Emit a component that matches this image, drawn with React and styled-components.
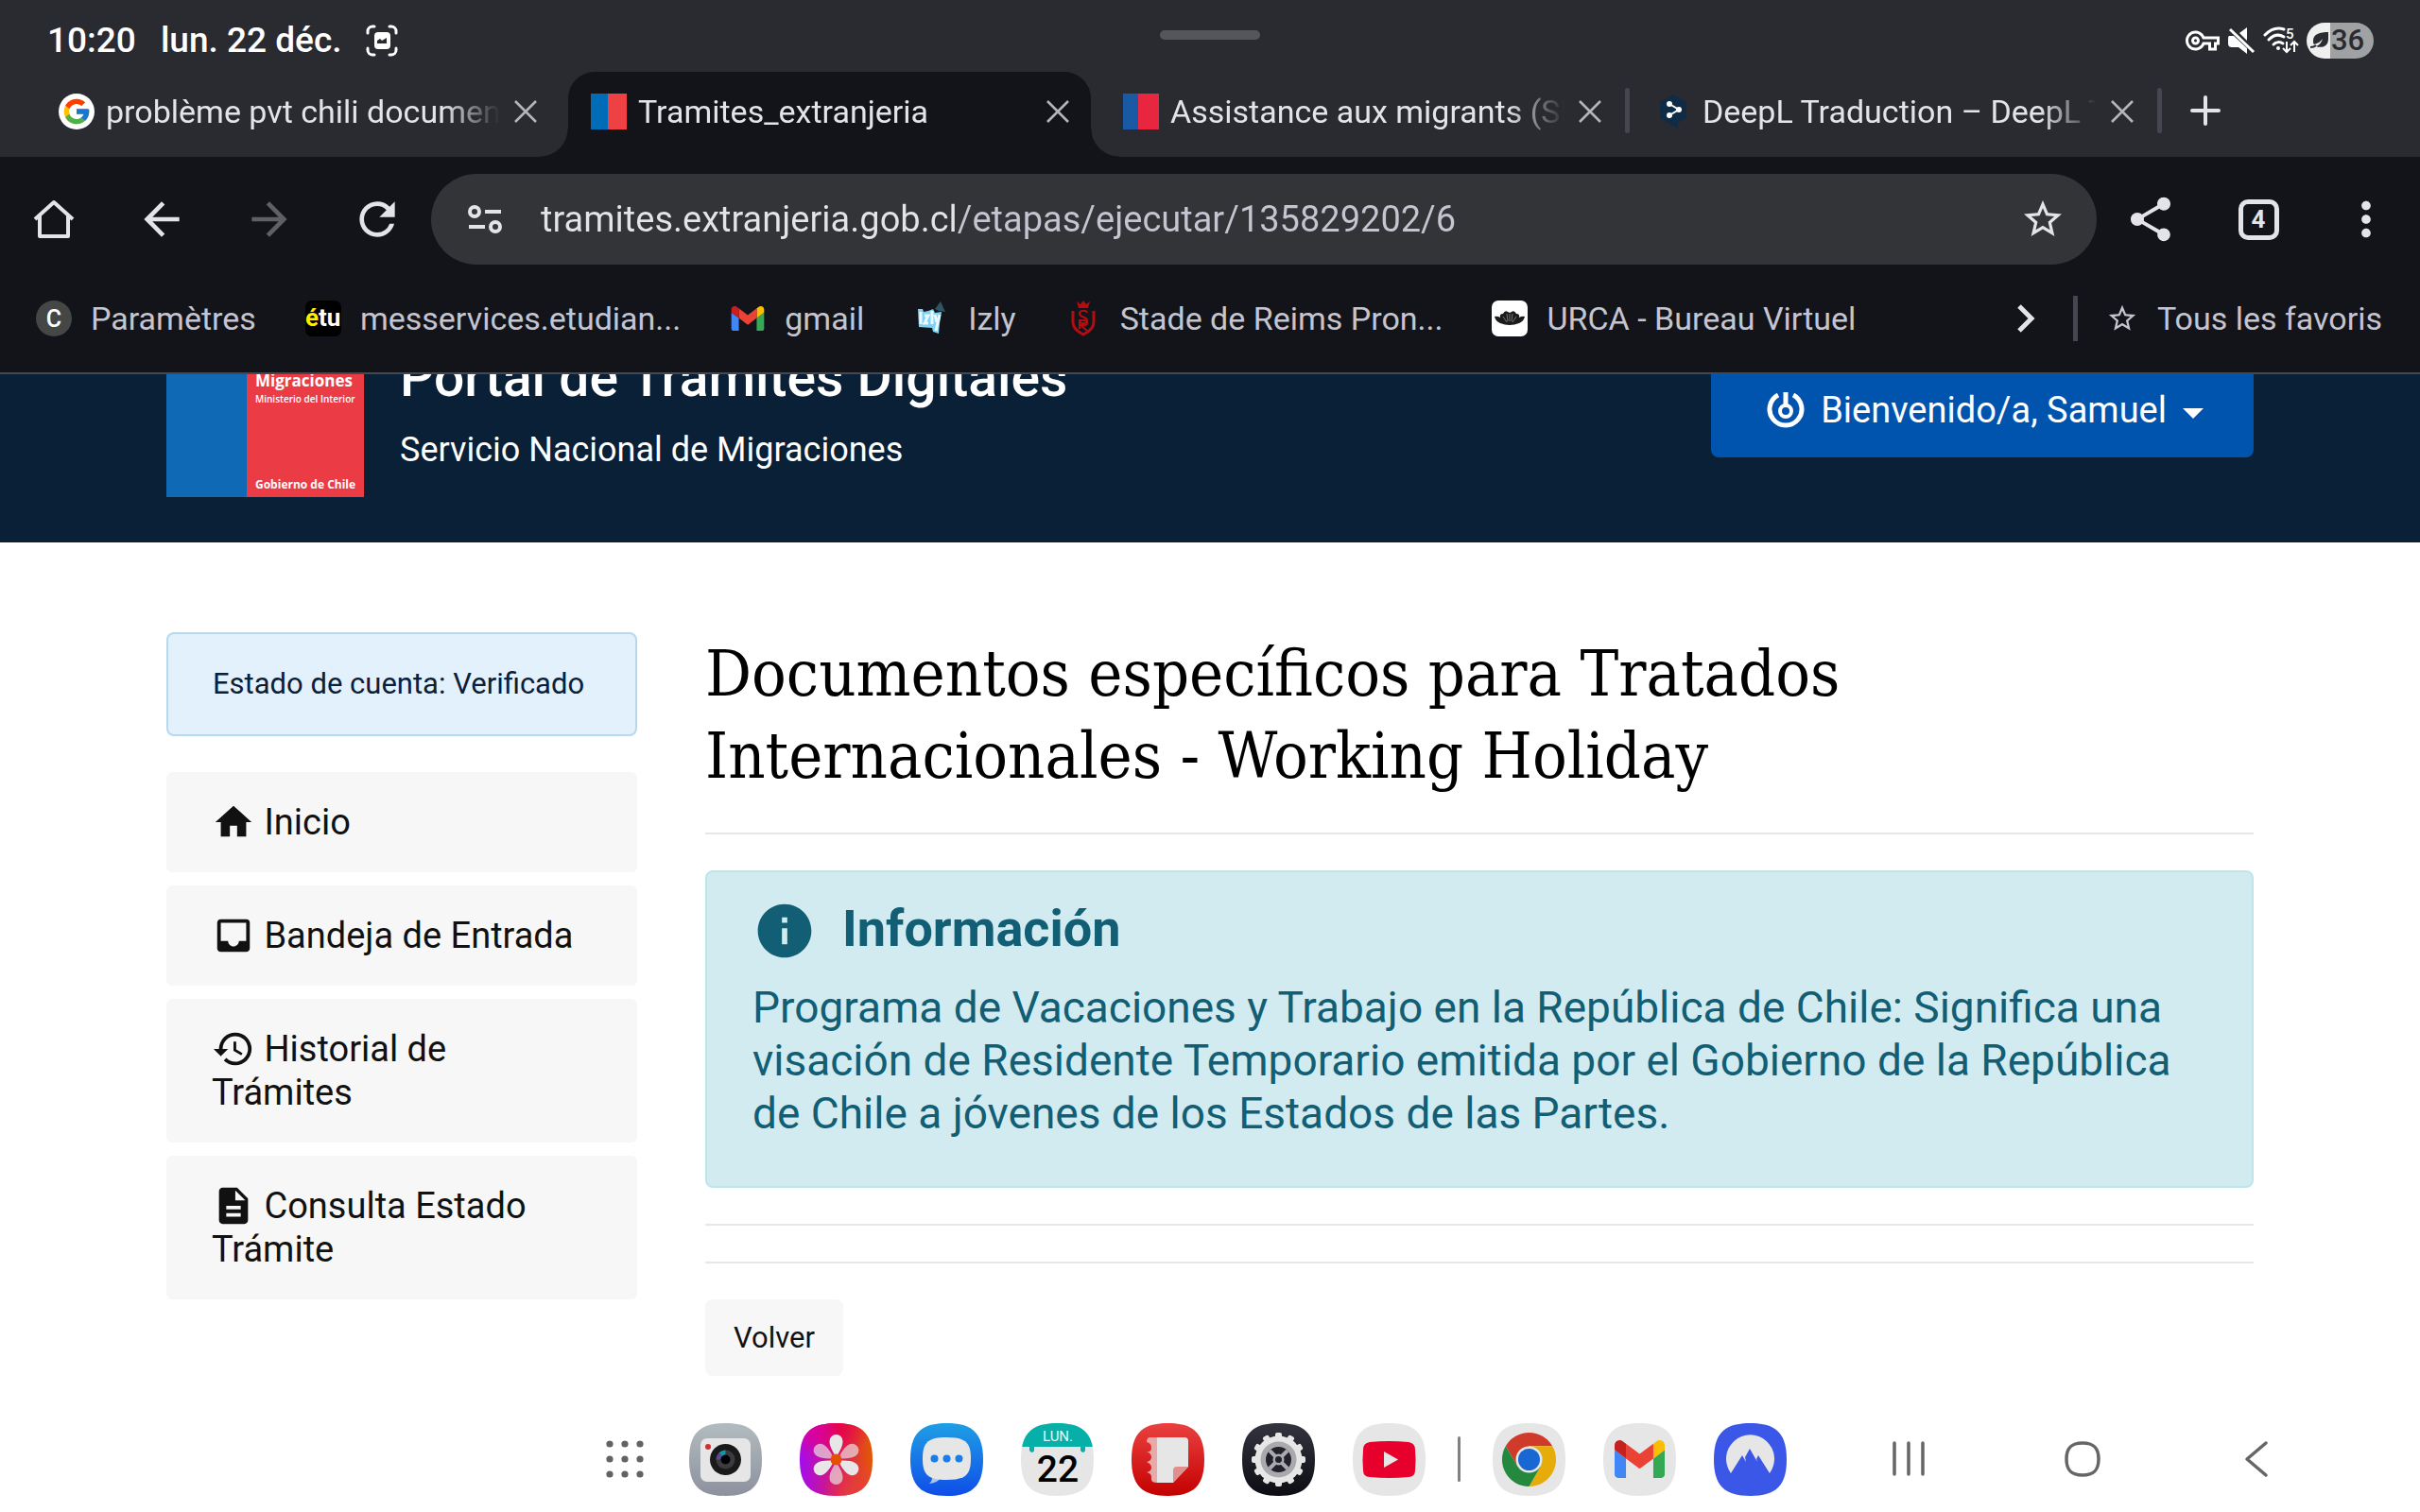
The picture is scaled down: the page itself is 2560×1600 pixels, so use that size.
import { useState } from "react";
import styled, { createGlobalStyle, css } from "styled-components";
import { FcGoogle } from "react-icons/fc";
import {
  MdArrowBack,
  MdArrowForward,
  MdDescription,
  MdHistory,
  MdHome,
  MdInbox,
  MdInfo,
  MdMoreVert,
  MdOutlineVpnKey,
  MdRefresh,
  MdShare,
  MdStarBorder,
} from "react-icons/md";

const ink = "#e3e3e8";
const squircle =
  "M38.5 0C66 0 77 11 77 38.5S66 77 38.5 77 0 66 0 38.5 11 0 38.5 0Z";

/* ---------- small drawings ---------- */

const CloseIcon = () => (
  <svg width="26" height="26" viewBox="0 0 26 26" aria-hidden="true">
    <path d="M2 2 24 24M24 2 2 24" stroke="#b4b5ba" strokeWidth="2.6" />
  </svg>
);

const PlusIcon = () => (
  <svg width="34" height="34" viewBox="0 0 34 34" aria-hidden="true">
    <path
      d="M17 3v28M3 17h28"
      stroke={ink}
      strokeWidth="4"
      strokeLinecap="round"
    />
  </svg>
);

const CaptureIcon = () => (
  <svg width="34" height="34" viewBox="0 0 34 34" aria-hidden="true">
    <path
      d="M2 9V7a5 5 0 0 1 5-5h2M25 2h2a5 5 0 0 1 5 5v2M32 25v2a5 5 0 0 1-5 5h-2M9 32H7a5 5 0 0 1-5-5v-2"
      fill="none"
      stroke="#fff"
      strokeWidth="3"
      strokeLinecap="round"
    />
    <rect x="9" y="8" width="17" height="18" rx="4" fill="#fff" />
    <path d="M12 20v-3l3-2 2 2 5-3v6Z" fill="#2a2b30" />
  </svg>
);

const MutedIcon = () => (
  <svg width="30" height="30" viewBox="0 0 30 30" aria-hidden="true">
    <path d="M13 7 21 1v14Z" fill="#fff" />
    <path d="M2 10h5l14 13v6l-9-7H5q-4 0-4-4v-5q0-3 1-3Z" fill="#fff" />
    <path d="M3 3 28 27" stroke="#fff" strokeWidth="3" />
  </svg>
);

const WifiIcon = () => (
  <svg width="38" height="30" viewBox="0 0 38 30" aria-hidden="true">
    <g fill="none" stroke="#fff" strokeWidth="3" strokeLinecap="round">
      <path d="M2 9C9 2 16 1 22 3" />
      <path d="M6 14c5-5 11-6 16-3" />
      <path d="M11 19c3-3 7-3 10-1" />
    </g>
    <circle cx="16" cy="23" r="2" fill="#fff" />
    <text
      x="24"
      y="13"
      fontSize="15"
      fontWeight="500"
      fontFamily="Roboto, sans-serif"
      fill="#fff"
    >
      5
    </text>
    <path
      d="M25 16v10M21 23l4 4 4-4M33 27V17M29 20l4-4 4 4"
      fill="none"
      stroke="#fff"
      strokeWidth="2"
    />
  </svg>
);

const LeafIcon = () => (
  <svg width="20" height="20" viewBox="0 0 20 20" aria-hidden="true">
    <path
      d="M19 1C10 1 3 3 3 10c0 2 0 3 1 4 4-1 7-3 9-6-1 4-4 7-7 8 5 2 13 1 13-8Z"
      fill="#2a2b30"
    />
    <path d="M0 17q4 0 6-2" stroke="#2a2b30" strokeWidth="2" fill="none" />
  </svg>
);

const HomeOutline = () => (
  <svg width="44" height="44" viewBox="0 0 44 44" aria-hidden="true">
    <path
      d="M2 22 22 4l20 18M7 18v22h30V18"
      fill="none"
      stroke={ink}
      strokeWidth="4"
      strokeLinejoin="round"
    />
  </svg>
);

const TuneIcon = () => (
  <svg width="38" height="32" viewBox="0 0 38 32" aria-hidden="true">
    <g fill="none" stroke={ink} strokeWidth="4">
      <circle cx="8" cy="8" r="5" />
      <circle cx="30" cy="24" r="5" />
      <path d="M19 8h17M2 24h17" />
    </g>
  </svg>
);

const ChevronIcon = () => (
  <svg width="40" height="32" viewBox="0 0 40 32" aria-hidden="true">
    <path d="m13 3 13 13-13 13" fill="none" stroke={ink} strokeWidth="5" />
  </svg>
);

const FlagIcon = ({ split, blue, red }) => (
  <svg width="38" height="38" viewBox="0 0 38 38" aria-hidden="true">
    <rect width="38" height="38" fill={red} />
    <rect width={split} height="38" fill={blue} />
  </svg>
);

const DeepLIcon = () => (
  <svg width="38" height="38" viewBox="0 0 38 38" aria-hidden="true">
    <path d="m19 1 14 8v17l-9 5v6l-7-4L5 26V9Z" fill="#0f2b46" />
    <path d="m15 11 10 6-10 6" fill="none" stroke="#fff" strokeWidth="2" />
    <circle cx="15" cy="11" r="3" fill="#fff" />
    <circle cx="25" cy="17" r="3" fill="#fff" />
    <circle cx="15" cy="23" r="3" fill="#fff" />
  </svg>
);

const GmailMark = (props) => (
  <svg viewBox="52 42 88 66" aria-hidden="true" {...props}>
    <path fill="#4285f4" d="M58 108h14V74L52 59v43c0 3.32 2.69 6 6 6" />
    <path fill="#34a853" d="M120 108h14c3.32 0 6-2.69 6-6V59l-20 15" />
    <path fill="#fbbc04" d="M120 48v26l20-15v-8c0-7.42-8.47-11.65-14.4-7.2" />
    <path fill="#ea4335" d="M72 74V48l24 18 24-18v26L96 92" />
    <path
      fill="#c5221f"
      d="M52 51v8l20 15V48l-5.6-4.2c-5.94-4.45-14.4-.22-14.4 7.2"
    />
  </svg>
);

const IzlyIcon = () => (
  <svg width="38" height="38" viewBox="0 0 38 38" aria-hidden="true">
    <path d="m23 9 6-8 5 11-7-1Z" fill="#2f5565" />
    <path
      d="M5 9h5l1 3 5-1 5-2 2 4 7-1-2 12-1 11-6-2-1-4-14-1Z"
      fill="#7ed3f2"
    />
    <path
      d="M8 12v13M12 16h4l-4 8h4M20 11v14M23 15l2 8M28 15l-4 17"
      stroke="#e9f9ff"
      strokeWidth="3"
      fill="none"
    />
  </svg>
);

const ReimsIcon = () => (
  <svg width="38" height="38" viewBox="0 0 38 38" aria-hidden="true">
    <path d="m12 1 4 3 3-4 3 4 4-3-2 7H14Z" fill="#b30d10" />
    <g fill="none" stroke="#b30d10" strokeWidth="2">
      <path d="M8 11v12c0 6 5 10 11 13 6-3 11-7 11-13V11" strokeWidth="3" />
      <path d="M23 13c-1-3-8-3-8 1s8 3 8 7-7 4-8 1" />
      <path d="M15 30v-9h5c4 0 4 5 0 5h-4l7 6" />
    </g>
  </svg>
);

const UrcaIcon = () => (
  <svg width="38" height="38" viewBox="0 0 38 38" aria-hidden="true">
    <rect width="38" height="38" rx="7" fill="#fff" />
    <path
      d="M3 17q3-1 6 1-1-4 3-4 2-4 5-2l2 1 2-1q3-2 5 2 4 0 3 4 3-2 6-1-1 5-6 7-10 4-20 0-5-2-6-7Z"
      fill="#1b1b1b"
    />
    <path d="m12 17 4 6M16 14l1 8M19 14v8M22 14l-1 8M26 17l-4 6" stroke="#777" />
  </svg>
);

const PowerIcon = () => (
  <svg width="40" height="40" viewBox="0 0 40 40" aria-hidden="true">
    <g fill="none" stroke="#fff">
      <path d="M12 4a17 17 0 1 0 16 0" strokeWidth="5" />
      <circle cx="20" cy="21" r="6" strokeWidth="4" />
      <path d="M20 1v14" strokeWidth="5" />
    </g>
  </svg>
);

/* ---------- dock icons ---------- */

const CameraApp = () => (
  <svg width="77" height="77" viewBox="0 0 77 77" aria-hidden="true">
    <linearGradient id="cam" x2="0" y2="1">
      <stop stopColor="#b2bcbf" />
      <stop offset="1" stopColor="#8d919e" />
    </linearGradient>
    <path d={squircle} fill="url(#cam)" />
    <rect x="12" y="16" width="53" height="46" rx="7" fill="#e6e6e6" />
    <circle cx="20" cy="25" r="3" fill="#d32f2f" />
    <circle cx="38.5" cy="38.5" r="16.5" fill="#1a1a1b" />
    <circle cx="38.5" cy="38.5" r="10" fill="#3d3b40" />
    <path d="M38.5 38.5v-10a10 10 0 0 0-7 3Z" fill="#1795a5" />
    <path d="m38.5 38.5-7-7a10 10 0 0 0-3 7Z" fill="#5b4a8f" />
    <circle cx="38.5" cy="38.5" r="5" fill="#000" />
  </svg>
);

const GalleryApp = () => (
  <svg width="77" height="77" viewBox="0 0 77 77" aria-hidden="true">
    <linearGradient id="gal" x2="1" y2="0">
      <stop stopColor="#a30cf0" />
      <stop offset="0.55" stopColor="#dd1a66" />
      <stop offset="1" stopColor="#e35a00" />
    </linearGradient>
    <radialGradient id="galTop" cx="0.5" cy="0" r="0.5">
      <stop stopColor="#e8003c" />
      <stop offset="1" stopColor="#e8003c" stopOpacity="0" />
    </radialGradient>
    <radialGradient id="galLeft" cx="0.2" cy="0.1" r="0.4">
      <stop stopColor="#dc00a0" />
      <stop offset="1" stopColor="#dc00a0" stopOpacity="0" />
    </radialGradient>
    <radialGradient id="galLow" cx="0.8" cy="1" r="0.5">
      <stop stopColor="#e5403a" />
      <stop offset="1" stopColor="#e5403a" stopOpacity="0" />
    </radialGradient>
    {["gal", "galTop", "galLeft", "galLow"].map((id) => (
      <path key={id} d={squircle} fill={`url(#${id})`} />
    ))}
    {[0, 60, 120, 180, 240, 300].map((deg) => (
      <path
        key={deg}
        d="M38.5 36C34 29 31.500 24 31.500 19a7 7 0 0 1 14 0C45.500 24 43 29 38.500 36Z"
        fill="#e8e6e6"
        fillOpacity={deg % 120 ? 0.68 : 1}
        transform={`rotate(${deg} 38.5 38.5)`}
      />
    ))}
    <circle cx="38.5" cy="38.5" r="6" fill="#e65000" />
  </svg>
);

const MessagesApp = () => (
  <svg width="77" height="77" viewBox="0 0 77 77" aria-hidden="true">
    <linearGradient id="msg" x2="0" y2="1">
      <stop stopColor="#1f9fe5" />
      <stop offset="1" stopColor="#0f4de8" />
    </linearGradient>
    <path d={squircle} fill="url(#msg)" />
    <path d="M23 54q1 7-3 10 9-1 12-6Z" fill="#a9c6f2" />
    <path
      d="M38.500 15C58 15 64 20 64 37.500S58 60 38.500 60 13 55 13 37.500 19 15 38.500 15Z"
      fill="#e6e6e6"
    />
    <circle cx="25.5" cy="37.5" r="4" fill="#1b7de6" />
    <circle cx="38.5" cy="37.5" r="4" fill="#1b7de6" />
    <circle cx="51.5" cy="37.5" r="4" fill="#1b7de6" />
  </svg>
);

const CalendarApp = () => (
  <svg width="77" height="77" viewBox="0 0 77 77" aria-hidden="true">
    <clipPath id="cal">
      <path d={squircle} />
    </clipPath>
    <g clipPath="url(#cal)">
      <rect width="77" height="77" fill="#e6e6e6" />
      <rect width="77" height="25" fill="#06b0a8" />
      <path d="M9 24h5v5q-2 4-5 0ZM63 24h5v5q-2 4-5 0Z" fill="#06b0a8" />
    </g>
    <g fontFamily="Roboto, sans-serif" textAnchor="middle">
      <text x="39" y="19" fontSize="15" fill="#e6f6f5">
        LUN.
      </text>
      <text x="39" y="62" fontSize="39" fontWeight="500" fill="#000">
        22
      </text>
    </g>
  </svg>
);

const NotesApp = () => (
  <svg width="77" height="77" viewBox="0 0 77 77" aria-hidden="true">
    <linearGradient id="notes" x2="0" y2="1">
      <stop stopColor="#ea4140" />
      <stop offset="1" stopColor="#c40000" />
    </linearGradient>
    <path d={squircle} fill="url(#notes)" />
    <path
      d="M27 15h-7q-4 0-4 5 5 1 5 6t-5 4q5 2 5 6t-5 5q5 2 5 6t-5 5q5 1 5 5-1 6 6 6Z"
      fill="#e8a9a8"
    />
    <path d="M27 15h29q4 0 4 4v27L44 63H27Z" fill="#e6e6e6" />
    <path d="M44 63V50q0-4 4-4h12Z" fill="#e08f8e" />
  </svg>
);

const SettingsApp = () => (
  <svg width="77" height="77" viewBox="0 0 77 77" aria-hidden="true">
    <linearGradient id="set" x2="0" y2="1">
      <stop stopColor="#34343f" />
      <stop offset="1" stopColor="#0c0c12" />
    </linearGradient>
    <path d={squircle} fill="url(#set)" />
    {[0, 30, 60, 90, 120, 150].map((deg) => (
      <rect
        key={deg}
        x="35"
        y="10"
        width="7"
        height="57"
        rx="2"
        fill="#e6e6e6"
        transform={`rotate(${deg} 38.5 38.5)`}
      />
    ))}
    <circle cx="38.5" cy="38.5" r="25" fill="#e6e6e6" />
    <circle cx="38.5" cy="38.5" r="19" fill="#aaaaae" />
    <circle cx="38.5" cy="38.5" r="13.5" fill="#22222c" />
    <path d="m29 29 19 19M48 29 29 48" stroke="#aaaaae" strokeWidth="4" />
    <circle cx="38.5" cy="38.5" r="6" fill="#aaaaae" />
    <circle cx="38.5" cy="38.5" r="3.500" fill="#22222c" />
  </svg>
);

const YoutubeApp = () => (
  <svg width="77" height="77" viewBox="0 0 77 77" aria-hidden="true">
    <path d={squircle} fill="#e6e6e6" />
    <path
      d="M18 20q20-2 41 0 7 1 7 8 1 10 0 22 0 7-7 7-20 2-41 0-7 0-7-7-1-12 0-22 0-7 7-8Z"
      fill="#e8002d"
    />
    <path d="m33 30 15 8.500L33 47Z" fill="#e6e6e6" />
  </svg>
);

const ChromeApp = () => (
  <svg width="77" height="77" viewBox="-38.5 -38.5 77 77" aria-hidden="true">
    <path d={squircle} transform="translate(-38.5 -38.5)" fill="#e6e6e6" />
    <path
      d="M-24.700-14.250A28.500 28.500 0 0 1 24.700-14.250H0L-12.340 7.120Z"
      fill="#d03a2b"
    />
    <path
      d="M24.700-14.250A28.500 28.500 0 0 1 0 28.500L12.340 7.120 0-14.250Z"
      fill="#e6ad0a"
    />
    <path
      d="M0 28.500A28.500 28.500 0 0 1-24.700-14.250L-12.340 7.120h24.680Z"
      fill="#24883f"
    />
    <circle r="14" fill="#e6e6e6" />
    <circle r="11.5" fill="#1967d2" />
  </svg>
);

const GmailApp = () => (
  <svg width="77" height="77" viewBox="0 0 77 77" aria-hidden="true">
    <path d={squircle} fill="#e6e6e6" />
    <GmailMark x="12" y="18" width="53" height="40" />
  </svg>
);

const NordApp = () => (
  <svg width="77" height="77" viewBox="0 0 77 77" aria-hidden="true">
    <path d={squircle} fill="#3a57e8" />
    <path
      d="M18 53A25.500 25.500 0 1 1 59 53L47 34l-2 4 1 3-8-14-5 9 1 5-4-7Z"
      fill="#e6e6e6"
    />
  </svg>
);

const DotsIcon = () => (
  <svg width="40" height="40" viewBox="0 0 40 40" aria-hidden="true">
    {[4, 20, 36].map((y) =>
      [4, 20, 36].map((x) => (
        <circle key={`${x}-${y}`} cx={x} cy={y} r="3.6" fill="#636363" />
      ))
    )}
  </svg>
);

const NavIcon = ({ d }) => (
  <svg width="44" height="44" viewBox="0 0 44 44" aria-hidden="true">
    <path
      d={d}
      fill="none"
      stroke="#666"
      strokeWidth="3.5"
      strokeLinecap="round"
      strokeLinejoin="round"
    />
  </svg>
);

/* ---------- data ---------- */

const tabs = [
  { title: "problème pvt chili documents", icon: <GoogleTabIcon /> },
  {
    title: "Tramites_extranjeria",
    icon: <FlagIcon split={18} blue="#006cb7" red="#ef4144" />,
  },
  {
    title: "Assistance aux migrants (SERMIG)",
    icon: <FlagIcon split={16} blue="#1a5aa5" red="#e8263f" />,
    divided: true,
  },
  { title: "DeepL Traduction – DeepL Translate", icon: <DeepLIcon />, divided: true },
];

const menu = [
  { label: "Inicio", Icon: MdHome },
  { label: "Bandeja de Entrada", Icon: MdInbox },
  { label: "Historial de Trámites", Icon: MdHistory },
  { label: "Consulta Estado Trámite", Icon: MdDescription },
];

const apps = [
  ["Appareil photo", CameraApp],
  ["Galerie", GalleryApp],
  ["Messages", MessagesApp],
  ["Calendrier", CalendarApp],
  ["Notes", NotesApp],
  ["Paramètres", SettingsApp],
  ["YouTube", YoutubeApp],
];

const recentApps = [
  ["Chrome", ChromeApp],
  ["Gmail", GmailApp],
  ["NordVPN", NordApp],
];

function GoogleTabIcon() {
  return (
    <RoundIcon>
      <FcGoogle size={32} />
    </RoundIcon>
  );
}

const App = () => {
  const [active, setActive] = useState(1);
  const [url, setUrl] = useState(
    "tramites.extranjeria.gob.cl/etapas/ejecutar/135829202/6"
  );

  return (
    <Screen>
      <GlobalStyle />
      <StatusBar>
        <span>10:20</span>
        <span>lun. 22 déc.</span>
        <CaptureIcon />
        <StatusIcons>
          <MdOutlineVpnKey size={36} />
          <MutedIcon />
          <WifiIcon />
          <Battery>
            <LeafIcon />
            36
          </Battery>
        </StatusIcons>
        <DragHandle />
      </StatusBar>

      <TabStrip>
        {tabs.map((tab, i) => (
          <Tab key={tab.title} $active={i === active} $divided={tab.divided}>
            <TabButton onClick={() => setActive(i)}>
              {tab.icon}
              <TabTitle>{tab.title}</TabTitle>
            </TabButton>
            <CloseButton aria-label="Fermer l'onglet">
              <CloseIcon />
            </CloseButton>
          </Tab>
        ))}
        <NewTabButton aria-label="Nouvel onglet">
          <PlusIcon />
        </NewTabButton>
      </TabStrip>

      <Toolbar>
        <ToolButton aria-label="Accueil">
          <HomeOutline />
        </ToolButton>
        <ToolButton aria-label="Retour">
          <MdArrowBack size={56} />
        </ToolButton>
        <ToolButton aria-label="Avancer" disabled>
          <MdArrowForward size={56} />
        </ToolButton>
        <ToolButton aria-label="Actualiser">
          <MdRefresh size={56} />
        </ToolButton>
        <Omnibox>
          <ToolButton aria-label="Informations du site">
            <TuneIcon />
          </ToolButton>
          <UrlInput
            aria-label="Adresse"
            value={url}
            onChange={(e) => setUrl(e.target.value)}
          />
          <ToolButton aria-label="Ajouter aux favoris">
            <MdStarBorder size={48} />
          </ToolButton>
        </Omnibox>
        <ToolButton aria-label="Partager">
          <MdShare size={56} />
        </ToolButton>
        <ToolButton aria-label="Onglets ouverts">
          <TabCount>4</TabCount>
        </ToolButton>
        <ToolButton aria-label="Menu">
          <MdMoreVert size={58} />
        </ToolButton>
      </Toolbar>

      <BookmarkBar>
        <Bookmark href="#parametres">
          <RoundIcon $dark>C</RoundIcon>
          Paramètres
        </Bookmark>
        <Bookmark href="#messervices">
          <EtuIcon>
            <em>é</em>tu
          </EtuIcon>
          messervices.etudian...
        </Bookmark>
        <Bookmark href="#gmail">
          <GmailMark width="38" height="26" />
          gmail
        </Bookmark>
        <Bookmark href="#izly">
          <IzlyIcon />
          Izly
        </Bookmark>
        <Bookmark href="#reims">
          <ReimsIcon />
          Stade de Reims Pron...
        </Bookmark>
        <Bookmark href="#urca">
          <UrcaIcon />
          URCA - Bureau Virtuel
        </Bookmark>
        <BookmarkEnd>
          <MoreButton aria-label="Plus de favoris">
            <ChevronIcon />
          </MoreButton>
          <BarDivider />
          <Bookmark href="#favoris">
            <MdStarBorder size={34} />
            Tous les favoris
          </Bookmark>
        </BookmarkEnd>
      </BookmarkBar>

      <Page>
        <Header>
          <Logo>
            <LogoBlue />
            <LogoRed>
              <LogoName>Migraciones</LogoName>
              <LogoMinistry>Ministerio del Interior</LogoMinistry>
              <LogoGov>Gobierno de Chile</LogoGov>
            </LogoRed>
          </Logo>
          <Brand>
            <BrandTitle>Portal de Trámites Digitales</BrandTitle>
            <BrandSub>Servicio Nacional de Migraciones</BrandSub>
          </Brand>
          <UserButton aria-haspopup="menu">
            <PowerIcon />
            Bienvenido/a, Samuel
            <Caret />
          </UserButton>
        </Header>

        <Content>
          <aside>
            <AccountState>Estado de cuenta: Verificado</AccountState>
            <SideNav>
              {menu.map(({ label, Icon }) => (
                <SideLink key={label} href="#menu">
                  <Icon size={46} /> {label}
                </SideLink>
              ))}
            </SideNav>
          </aside>
          <main>
            <Heading>
              Documentos específicos para Tratados Internacionales - Working
              Holiday
            </Heading>
            <Rule />
            <Alert>
              <AlertTitle>
                <MdInfo size={68} />
                Información
              </AlertTitle>
              <AlertText>
                Programa de Vacaciones y Trabajo en la República de Chile:
                Significa una visación de Residente Temporario emitida por el
                Gobierno de la República de Chile a jóvenes de los Estados de
                las Partes.
              </AlertText>
            </Alert>
            <Rule />
            <Rule />
            <BackButton>Volver</BackButton>
          </main>
        </Content>
      </Page>

      <Dock>
        <AppsButton aria-label="Applications">
          <DotsIcon />
        </AppsButton>
        <AppRow>
          {apps.map(([name, Icon]) => (
            <AppButton key={name} aria-label={name}>
              <Icon />
            </AppButton>
          ))}
        </AppRow>
        <DockDivider />
        <AppRow>
          {recentApps.map(([name, Icon]) => (
            <AppButton key={name} aria-label={name}>
              <Icon />
            </AppButton>
          ))}
        </AppRow>
        <NavRow>
          <AppButton aria-label="Récents">
            <NavIcon d="M7 5v33M22 5v33M37 5v33" />
          </AppButton>
          <AppButton aria-label="Écran d'accueil">
            <NavIcon d="M22 5c12 0 17 5 17 17s-5 17-17 17S5 34 5 22 10 5 22 5Z" />
          </AppButton>
          <AppButton aria-label="Précédent">
            <NavIcon d="M32 5 12 22l20 17" />
          </AppButton>
        </NavRow>
      </Dock>
    </Screen>
  );
};

const GlobalStyle = createGlobalStyle`
  * {
    box-sizing: border-box;
  }
  body {
    margin: 0;
    background: #fff;
    font-family: Roboto, sans-serif;
  }
  button {
    border: none;
    background: none;
    padding: 0;
    font: inherit;
    color: inherit;
    cursor: pointer;
  }
  a {
    color: inherit;
    text-decoration: none;
  }
  svg {
    flex: none;
  }
`;
const Screen = styled.div`
  display: flex;
  flex-direction: column;
  height: 100vh;
  overflow: hidden;
`;
const StatusBar = styled.div`
  position: relative;
  display: flex;
  align-items: center;
  gap: 26px;
  height: 76px;
  padding: 9px 49px 0 50px;
  background: #2a2b30;
  color: #fff;
  font-size: 37px;
  font-weight: 500;
`;
const StatusIcons = styled.div`
  display: flex;
  align-items: center;
  gap: 8px;
  margin-left: auto;
`;
const Battery = styled.div`
  display: flex;
  align-items: center;
  gap: 2px;
  width: 71px;
  height: 38px;
  padding-left: 4px;
  border-radius: 19px;
  background: linear-gradient(90deg, #efefef 25px, #a0a1a3 25px);
  color: #2a2b30;
  font-size: 31px;
  font-weight: 500;
`;
const DragHandle = styled.div`
  position: absolute;
  top: 32px;
  left: 50%;
  width: 106px;
  height: 10px;
  margin-left: -53px;
  border-radius: 5px;
  background: #55565a;
`;
const TabStrip = styled.div`
  display: flex;
  align-items: stretch;
  height: 90px;
  padding-left: 33px;
  background: #2a2b30;
  color: ${ink};
`;
const activeTab = css`
  flex-basis: 553px;
  margin: 0 5px;
  padding: 0 22px 6px 24px;
  border-radius: 28px 28px 0 0;
  background: #131419;
  &::before,
  &::after {
    content: "";
    position: absolute;
    bottom: 0;
    width: 30px;
    height: 30px;
  }
  &::before {
    left: -30px;
    background: radial-gradient(circle at 0 0, transparent 29px, #131419 30px);
  }
  &::after {
    right: -30px;
    background: radial-gradient(
      circle at 100% 0,
      transparent 29px,
      #131419 30px
    );
  }
`;
const dividedTab = css`
  &::after {
    content: "";
    position: absolute;
    top: 17px;
    right: -2px;
    width: 5px;
    height: 48px;
    border-radius: 3px;
    background: #45464f;
  }
`;
const Tab = styled.div`
  position: relative;
  display: flex;
  align-items: center;
  flex: 0 1 563px;
  min-width: 0;
  padding: 0 27px 6px 29px;
  ${(props) => props.$divided && dividedTab}
  ${(props) => props.$active && activeTab}
`;
const TabButton = styled.button`
  display: flex;
  align-items: center;
  gap: 12px;
  flex: 1;
  min-width: 0;
`;
const TabTitle = styled.span`
  flex: 1;
  overflow: hidden;
  font-size: 34px;
  line-height: 44px;
  text-align: left;
  white-space: nowrap;
  mask-image: linear-gradient(90deg, #000 calc(100% - 60px), transparent);
`;
const CloseButton = styled.button`
  display: flex;
  justify-content: flex-end;
  width: 40px;
`;
const NewTabButton = styled.button`
  display: flex;
  align-items: center;
  justify-content: center;
  width: 96px;
  padding-bottom: 8px;
`;
const Toolbar = styled.div`
  display: flex;
  align-items: center;
  height: 132px;
  background: #131419;
  color: ${ink};
`;
const ToolButton = styled.button`
  display: flex;
  align-items: center;
  justify-content: center;
  flex: none;
  width: 114px;
  height: 96px;
  &:disabled {
    color: #5f6065;
  }
`;
const Omnibox = styled.div`
  display: flex;
  align-items: center;
  flex: 1;
  height: 96px;
  border-radius: 48px;
  background: #333438;
`;
const UrlInput = styled.input`
  flex: 1;
  min-width: 0;
  height: 60px;
  border: none;
  outline: none;
  padding: 0 0 0 2px;
  font: inherit;
  font-size: 38px;
  color: transparent;
  caret-color: ${ink};
  background: linear-gradient(90deg, ${ink} 443px, #c4c5d0 443px);
  background-clip: text;
`;
const TabCount = styled.span`
  display: flex;
  align-items: center;
  justify-content: center;
  width: 43px;
  height: 43px;
  border: 5px solid ${ink};
  border-radius: 10px;
  font-size: 26px;
  font-weight: 700;
`;
const BookmarkBar = styled.nav`
  display: flex;
  align-items: center;
  gap: 52px;
  height: 96px;
  padding: 0 40px 18px 38px;
  background: #131419;
  color: #c4c5d0;
  font-size: 34px;
`;
const Bookmark = styled.a`
  display: flex;
  align-items: center;
  gap: 20px;
  white-space: nowrap;
`;
const BookmarkEnd = styled.div`
  display: flex;
  align-items: center;
  gap: 30px;
  margin-left: auto;
`;
const MoreButton = styled.button`
  display: flex;
`;
const BarDivider = styled.span`
  width: 5px;
  height: 48px;
  background: #45464f;
`;
const RoundIcon = styled.span`
  display: flex;
  align-items: center;
  justify-content: center;
  width: 38px;
  height: 38px;
  border-radius: 50%;
  background: ${(props) => (props.$dark ? "#444746" : "#fff")};
  color: #fff;
  font-size: 25px;
  font-weight: 500;
`;
const EtuIcon = styled.span`
  width: 38px;
  height: 38px;
  overflow: hidden;
  border-radius: 7px;
  background: #000;
  color: #fff;
  font-size: 26px;
  font-weight: 700;
  line-height: 36px;
  & em {
    color: #ffee00;
    font-style: normal;
  }
`;
const Page = styled.div`
  flex: 1;
  min-height: 0;
  overflow: hidden;
  border-top: 2px solid #47484d;
  background: #fff;
`;
const Header = styled.header`
  display: flex;
  align-items: flex-end;
  height: 178px;
  padding: 0 176px 48px;
  overflow: hidden;
  background: #0a2037;
  color: #fff;
`;
const Logo = styled.div`
  display: flex;
  flex: none;
  width: 209px;
  height: 190px;
`;
const LogoBlue = styled.div`
  flex: none;
  width: 85px;
  background: #1069b4;
`;
const LogoRed = styled.div`
  display: flex;
  flex-direction: column;
  justify-content: flex-end;
  flex: 1;
  min-width: 0;
  padding: 0 9px 5px;
  background: #eb3c46;
  font-family: "Open Sans", sans-serif;
  font-weight: 700;
  white-space: nowrap;
`;
const LogoName = styled.span`
  font-size: 17px;
  line-height: 22px;
`;
const LogoMinistry = styled.span`
  font-size: 10px;
  font-weight: 600;
  line-height: 16px;
`;
const LogoGov = styled.span`
  margin-top: 75px;
  font-size: 12px;
  line-height: 16px;
`;
const Brand = styled.div`
  margin-left: 38px;
  padding-bottom: 25px;
`;
const BrandTitle = styled.div`
  font-size: 57px;
  font-weight: 500;
  line-height: 64px;
`;
const BrandSub = styled.div`
  margin-top: 19px;
  font-size: 36px;
  line-height: 50px;
`;
const UserButton = styled.button`
  display: flex;
  align-items: center;
  gap: 17px;
  height: 100px;
  margin: 0 0 42px auto;
  padding: 0 53px 0 59px;
  border-radius: 8px;
  background: #0054ad;
  font-size: 38px;
  white-space: nowrap;
`;
const Caret = styled.span`
  margin-top: 6px;
  border: 11px solid transparent;
  border-top-color: #fff;
  border-bottom: none;
`;
const Content = styled.div`
  display: grid;
  grid-template-columns: 498px 1fr;
  gap: 72px;
  padding: 95px 176px 0;
`;
const AccountState = styled.div`
  margin-bottom: 38px;
  padding: 30px 47px;
  border: 2px solid #b5d9ef;
  border-radius: 8px;
  background: #e3f1fd;
  color: #0a2037;
  font-size: 31px;
  line-height: 46px;
`;
const SideNav = styled.nav`
  display: flex;
  flex-direction: column;
  gap: 14px;
`;
const SideLink = styled.a`
  padding: 30px 48px;
  border-radius: 6px;
  background: #f7f7f7;
  color: #111;
  font-size: 38px;
  line-height: 46px;
  & svg {
    vertical-align: top;
  }
`;
const Heading = styled.h1`
  margin: 0;
  color: #000;
  font-family: "DejaVu Serif Condensed", "DejaVu Serif", serif;
  font-size: 68px;
  font-weight: 400;
  line-height: 87px;
`;
const Rule = styled.hr`
  height: 2px;
  margin: 38px 0;
  border: none;
  background: #e5e6e8;
`;
const Alert = styled.section`
  padding: 28px 48px 49px;
  border: 2px solid #bee5eb;
  border-radius: 8px;
  background: #d1ebf0;
  color: #115e75;
`;
const AlertTitle = styled.h2`
  display: flex;
  align-items: flex-start;
  gap: 27px;
  margin: 0 0 19px;
  font-size: 54px;
  font-weight: 700;
  line-height: 64px;
`;
const AlertText = styled.p`
  margin: 0;
  font-size: 46px;
  line-height: 56px;
`;
const BackButton = styled.button`
  height: 81px;
  padding: 0 30px;
  border-radius: 8px;
  background: #f7f7f7;
  color: #111;
  font-size: 31px;
`;
const Dock = styled.footer`
  display: flex;
  align-items: center;
  justify-content: flex-end;
  height: 112px;
  padding-right: 151px;
  background: #fff;
`;
const AppsButton = styled.button`
  display: flex;
  margin-right: 48px;
`;
const AppRow = styled.div`
  display: flex;
  gap: 40px;
`;
const AppButton = styled.button`
  display: flex;
`;
const DockDivider = styled.span`
  width: 3px;
  height: 48px;
  margin: 0 34px;
  border-radius: 2px;
  background: #808080;
`;
const NavRow = styled.div`
  display: flex;
  gap: 140px;
  margin-left: 107px;
`;

export default App;
